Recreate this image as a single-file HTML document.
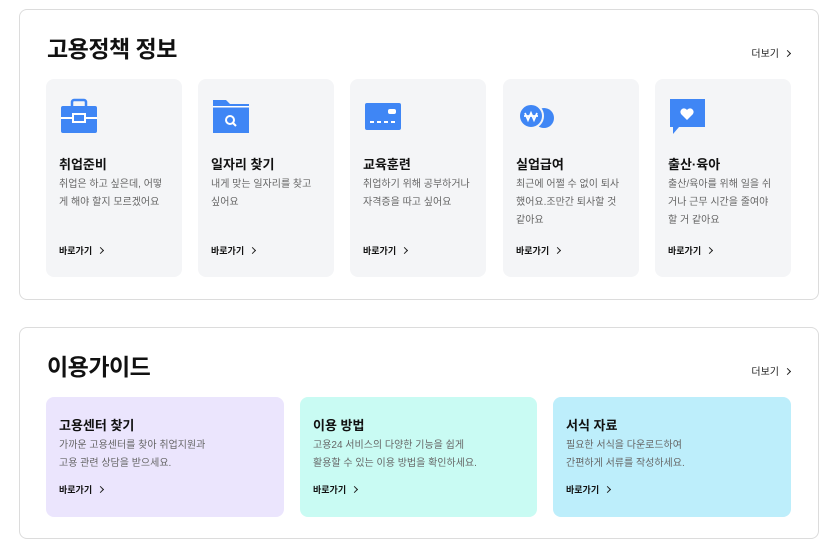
<!DOCTYPE html>
<html><head><meta charset="utf-8"><style>
*{margin:0;padding:0;box-sizing:border-box}
body{width:838px;height:550px;background:#fff;font-family:"Liberation Sans","Noto Sans CJK KR",sans-serif;color:#111;position:relative;overflow:hidden}
.box{position:absolute;left:19px;width:800px;border:1px solid #dcdcdc;border-radius:8px}
.h{position:absolute;left:27px;font-size:23px;font-weight:700;letter-spacing:-0.5px}
.more{position:absolute;right:28px;font-size:10px;color:#222}
.more:after,.go:after{content:"";display:inline-block;width:4px;height:4px;border-right:1.3px solid #222;border-top:1.3px solid #222;transform:rotate(45deg);margin-left:6px;vertical-align:1px}
.c{position:absolute;top:69px;width:136px;height:198px;background:#f4f5f7;border-radius:8px}
.c svg{position:absolute;left:14px;top:18px}
.t{position:absolute;left:13px;font-size:13px;font-weight:700}
.c .t{top:75px}
.d{position:absolute;left:13px;font-size:10px;color:#666;line-height:18px;word-break:break-all}
.c .d{top:97px;width:108px}
.go{position:absolute;left:13px;font-size:9px;font-weight:700}
.c .go{top:165px}
.g{position:absolute;top:69px;height:120px;border-radius:8px}
.g .t{top:18px}.g .d{top:40px}.g .go{top:86px}
</style></head><body>
<div class="box" style="top:9px;height:291px">
 <div class="h" style="top:20px">고용정책 정보</div>
 <div class="more" style="top:35px">더보기</div>
 <div class="c" style="left:26px"><svg width="38" height="38" viewBox="0 0 38 38"><rect x="12" y="3" width="14" height="8" rx="2" fill="none" stroke="#3f86f5" stroke-width="2.5"/><rect x="1" y="9" width="36" height="27" rx="2" fill="#3f86f5"/><rect x="1" y="20" width="36" height="2" fill="#fff"/><rect x="13" y="17" width="12" height="8" fill="#3f86f5" stroke="#fff" stroke-width="2"/></svg>
  <div class="t">취업준비</div><div class="d">취업은 하고 싶은데, 어떻게 해야 할지 모르겠어요</div><div class="go">바로가기</div></div>
 <div class="c" style="left:178px"><svg width="38" height="38" viewBox="0 0 38 38"><path d="M1 3h13l4 4h19v29H1z" fill="#3f86f5"/><rect x="1" y="9" width="36" height="1.5" fill="#fff"/><circle cx="18" cy="23" r="4" fill="none" stroke="#fff" stroke-width="2"/><path d="M21 26l3 3" stroke="#fff" stroke-width="2"/></svg>
  <div class="t">일자리 찾기</div><div class="d">내게 맞는 일자리를 찾고<br>싶어요</div><div class="go">바로가기</div></div>
 <div class="c" style="left:330px"><svg width="38" height="38" viewBox="0 0 38 38"><rect x="1" y="6" width="36" height="27" rx="2" fill="#3f86f5"/><rect x="24" y="12" width="8" height="5" rx="2" fill="#fff"/><path d="M6 25h4M13 25h4M20 25h4M27 25h4" stroke="#fff" stroke-width="2"/></svg>
  <div class="t">교육훈련</div><div class="d">취업하기 위해 공부하거나<br>자격증을 따고 싶어요</div><div class="go">바로가기</div></div>
 <div class="c" style="left:483px"><svg width="40" height="38" viewBox="0 0 40 38"><circle cx="27" cy="21" r="10" fill="#3f86f5"/><circle cx="14" cy="19" r="12" fill="#3f86f5" stroke="#f4f5f7" stroke-width="2"/><path d="M8 16l3 7 3-7 3 7 3-7M7 19h14" stroke="#fff" stroke-width="1.8" fill="none"/></svg>
  <div class="t">실업급여</div><div class="d">최근에 어쩔 수 없이 퇴사<br>했어요.조만간 퇴사할 것<br>같아요</div><div class="go">바로가기</div></div>
 <div class="c" style="left:635px"><svg width="38" height="40" viewBox="0 0 38 40"><path d="M1 2h35v28H10l-6 7v-7H1z" fill="#3f86f5"/><path d="M18 23l-6-6a3.5 3.5 0 0 1 6-4 3.5 3.5 0 0 1 6 4z" fill="#fff"/></svg>
  <div class="t">출산·육아</div><div class="d">출산/육아를 위해 일을 쉬<br>거나 근무 시간을 줄여야<br>할 거 같아요</div><div class="go">바로가기</div></div>
</div>
<div class="box" style="top:327px;height:212px">
 <div class="h" style="top:20px">이용가이드</div>
 <div class="more" style="top:35px">더보기</div>
 <div class="g" style="left:26px;width:238px;background:#ebe5fd"><div class="t">고용센터 찾기</div><div class="d">가까운 고용센터를 찾아 취업지원과<br>고용 관련 상담을 받으세요.</div><div class="go">바로가기</div></div>
 <div class="g" style="left:280px;width:237px;background:#c9fbf3"><div class="t">이용 방법</div><div class="d">고용24 서비스의 다양한 기능을 쉽게<br>활용할 수 있는 이용 방법을 확인하세요.</div><div class="go">바로가기</div></div>
 <div class="g" style="left:533px;width:238px;background:#bdeefb"><div class="t">서식 자료</div><div class="d">필요한 서식을 다운로드하여<br>간편하게 서류를 작성하세요.</div><div class="go">바로가기</div></div>
</div>
</body></html>
